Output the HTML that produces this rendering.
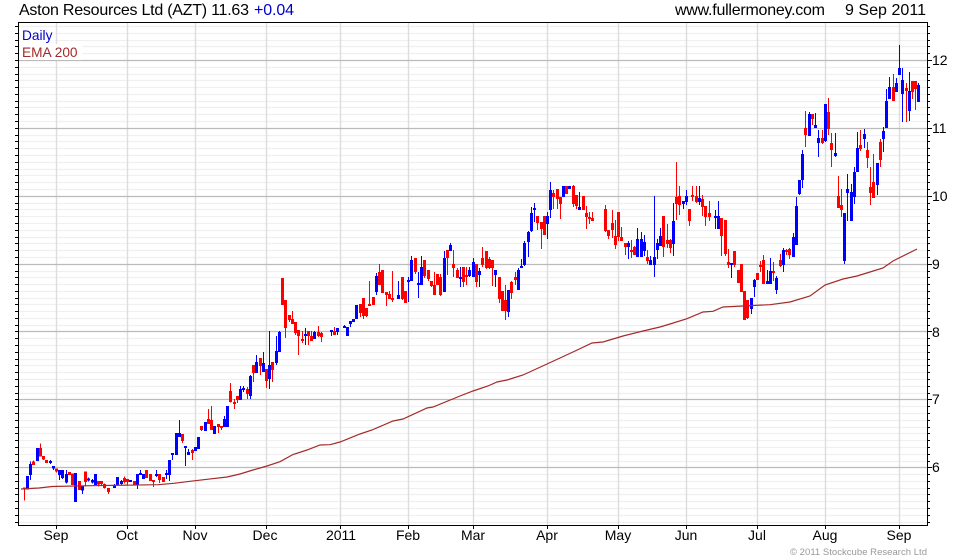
<!DOCTYPE html>
<html><head><meta charset="utf-8"><title>Aston Resources Ltd (AZT)</title>
<style>
html,body{margin:0;padding:0;background:#fff}
svg{display:block}
text{font-family:"Liberation Sans",Arial,sans-serif;fill:#000}
.t{font-size:16px}.a{font-size:14px}.l{font-size:13.7px}
</style></head><body>
<svg width="980" height="560" viewBox="0 0 980 560" xmlns="http://www.w3.org/2000/svg">
<rect width="980" height="560" fill="#fff"/>
<path fill="none" stroke="#f0f0f0" stroke-width="1.3" d="M19 26.5H927M19 33.5H927M19 40.5H927M19 46.5H927M19 53.5H927M19 67.5H927M19 74.5H927M19 80.5H927M19 87.5H927M19 94.5H927M19 101.5H927M19 107.5H927M19 114.5H927M19 121.5H927M19 135.5H927M19 141.5H927M19 148.5H927M19 155.5H927M19 162.5H927M19 169.5H927M19 175.5H927M19 182.5H927M19 189.5H927M19 203.5H927M19 209.5H927M19 216.5H927M19 223.5H927M19 230.5H927M19 237.5H927M19 243.5H927M19 250.5H927M19 257.5H927M19 271.5H927M19 277.5H927M19 284.5H927M19 291.5H927M19 298.5H927M19 304.5H927M19 311.5H927M19 318.5H927M19 325.5H927M19 338.5H927M19 345.5H927M19 352.5H927M19 359.5H927M19 365.5H927M19 372.5H927M19 379.5H927M19 386.5H927M19 393.5H927M19 406.5H927M19 413.5H927M19 420.5H927M19 427.5H927M19 433.5H927M19 440.5H927M19 447.5H927M19 454.5H927M19 461.5H927M19 474.5H927M19 481.5H927M19 488.5H927M19 494.5H927M19 501.5H927M19 508.5H927M19 515.5H927M19 522.5H927"/>
<path fill="none" stroke="#dddddd" stroke-width="1.4" d="M56.5 22V525M127.5 22V525M195.5 22V525M266.5 22V525M340.5 22V525M408.5 22V525M473.5 22V525M547.5 22V525M618.5 22V525M686.5 22V525M757.5 22V525M825.5 22V525M899.5 22V525"/>
<path fill="none" stroke="#bbbbbb" stroke-width="1.3" d="M19 60.5H927M19 128.5H927M19 196.5H927M19 264.5H927M19 331.5H927M19 399.5H927M19 467.5H927"/>
<rect x="20" y="28" width="35" height="16" fill="#fff"/><rect x="20" y="44" width="62" height="16" fill="#fff"/>

<g shape-rendering="crispEdges" fill="none">
<g transform="translate(0,420) scale(.33333)">
<path stroke="#0000ff" stroke-width="3" d="M82 168V208M91 124V180M112 84V123M151 120V132M160 138V150M178 150V180M187 150V177M199 150V190M226 159V246M247 197V222M265 172V185M277 177V190M286 162V195M343 192V204M352 171V195M364 180V193M391 180V186M412 162V207M421 150V165M430 162V177M469 150V171M499 150V177M508 120V183M517 99V120M529 39V105M538 0V51M556 78V138M565 87V105M586 81V93M595 51V87"/>
<path stroke="#0000ff" stroke-width="9" d="M82 168V208M91 132V165M112 84V123M151 123V129M160 138V146M178 150V165M187 150V174M199 162V187M226 159V246M247 197V211M265 175V181M277 180V187M286 162V195M343 195V204M352 171V195M364 183V192M391 180V186M412 162V195M421 159V165M430 162V177M469 162V168M499 159V165M508 120V165M517 99V105M529 39V105M538 39V51M556 78V84M565 96V105M586 81V93M595 51V87"/>
<path stroke="#ff0000" stroke-width="3" d="M73 202V242M100 122V135M121 70V110M130 108V120M139 120V129M169 145V158M208 156V165M217 160V195M238 183V210M256 155V200M295 183V200M304 183V195M313 190V205M325 204V222M373 170V190M382 177V195M403 183V195M439 150V174M451 162V183M460 180V201M478 162V189M490 171V186M547 42V69M577 87V120"/>
<path stroke="#ff0000" stroke-width="9" d="M73 202V208M100 124V135M121 84V110M130 108V118M139 120V129M169 145V155M208 156V165M217 160V195M238 183V210M256 155V186M295 183V193M304 183V192M313 192V204M325 204V216M373 174V186M382 177V186M403 183V195M439 150V174M451 162V183M460 180V186M478 162V180M490 171V186M547 42V63M577 90V99"/>
</g>
<g transform="translate(160,270) scale(.33333)">
<path stroke="#0000ff" stroke-width="3" d="M136 456V483M163 468V492M193 438V471M202 408V471M241 348V390M250 348V366M271 315V387M289 255V309M310 246V306M328 183V357M349 198V285M358 183V246M436 174V225M463 183V207M514 180V198M532 174V195M553 165V174M562 171V198M571 153V171"/>
<path stroke="#0000ff" stroke-width="9" d="M136 456V483M163 468V492M193 447V471M202 408V471M241 357V390M250 354V360M271 318V378M289 276V309M310 279V306M328 285V327M349 243V279M358 186V246M436 192V198M463 186V207M514 180V186M532 174V186M553 168V174M562 171V198M571 156V162"/>
<path stroke="#ff0000" stroke-width="3" d="M124 468V483M145 417V462M154 408V480M175 462V489M184 468V480M211 339V397M223 387V417M232 378V399M262 351V387M280 285V336M301 264V315M319 297V354M337 276V336M367 24V105M376 90V204M388 135V156M397 123V162M406 156V195M415 180V255M427 183V219M445 183V225M454 183V213M475 168V201M484 186V216M523 171V195"/>
<path stroke="#ff0000" stroke-width="9" d="M124 468V480M145 447V462M154 450V480M175 462V471M184 468V474M211 363V396M223 396V402M232 378V390M262 357V372M280 285V309M301 264V288M319 297V333M337 276V300M367 24V105M376 90V174M388 135V150M397 147V162M406 156V189M415 180V198M427 207V213M445 183V198M454 198V213M475 186V198M484 189V201M523 183V195"/>
</g>
<g transform="translate(350,170) scale(.33333)">
<path stroke="#0000ff" stroke-width="3" d="M1 453V462M10 447V456M19 405V447M79 309V375M145 333V387M175 321V396M184 258V333M205 306V384M214 258V345M283 243V366M301 219V243M331 291V351M358 291V321M370 264V321M388 294V351M436 300V351M475 360V441M505 294V360M514 267V294M523 213V288M535 183V261M544 111V186M553 99V156M592 126V207M601 36V144M640 48V81M658 48V57"/>
<path stroke="#0000ff" stroke-width="9" d="M1 453V462M10 447V456M19 405V447M79 318V366M145 375V387M175 330V336M184 270V333M205 339V345M214 291V345M283 264V366M301 225V243M331 321V327M358 300V318M370 276V321M388 303V315M436 300V315M475 360V426M505 300V360M514 288V294M523 219V285M535 186V216M544 129V183M553 114V120M592 138V162M601 60V120M640 48V81M658 48V57"/>
<path stroke="#ff0000" stroke-width="3" d="M31 402V441M40 384V447M49 414V441M58 333V408M70 381V405M88 282V345M97 300V369M109 366V408M118 363V387M127 303V396M157 321V390M166 363V399M196 264V312M223 270V324M235 300V333M244 333V351M253 306V375M262 312V345M271 312V378M292 240V315M310 240V321M322 294V324M340 291V351M349 291V345M379 282V351M397 231V291M409 243V297M418 261V297M427 270V348M448 321V399M457 363V423M466 345V450M484 333V387M496 306V345M562 138V180M574 156V237M583 138V195M610 60V117M622 57V117M631 81V147M649 48V72"/>
<path stroke="#ff0000" stroke-width="9" d="M31 402V429M40 384V438M49 414V438M58 402V408M70 381V405M88 306V345M97 300V369M109 366V375M118 372V387M127 384V390M157 321V387M166 363V399M196 264V306M223 270V318M235 300V327M244 333V348M253 345V375M262 312V345M271 321V375M292 240V264M310 282V294M322 300V324M340 291V336M349 315V321M379 282V336M397 264V285M409 243V294M418 267V294M427 270V294M448 321V387M457 363V423M466 390V423M484 336V369M496 321V330M562 138V159M574 156V177M583 138V195M610 69V81M622 57V87M631 81V102M649 48V72"/>
</g>
<g transform="translate(570,150) scale(.33333)">
<path stroke="#0000ff" stroke-width="3" d="M28 126V180M175 273V327M202 234V321M214 246V321M223 255V318M241 318V345M253 138V381M262 267V327M271 234V288M310 159V318M340 153V177M349 120V165M388 108V165M436 180V237M445 153V237M484 339V384M544 444V492M553 387V441M592 360V402M601 324V402M619 378V432M640 294V366"/>
<path stroke="#0000ff" stroke-width="9" d="M28 171V180M175 279V291M202 267V321M214 267V321M223 276V303M241 330V345M253 321V345M262 279V300M271 258V288M310 213V282M340 153V162M349 138V156M388 144V156M436 198V204M445 198V237M484 339V345M544 444V477M553 390V411M592 393V402M601 363V402M619 384V420M640 300V345"/>
<path stroke="#ff0000" stroke-width="3" d="M10 105V171M19 135V177M40 138V180M49 168V237M58 186V222M67 186V213M106 165V246M115 240V267M127 180V264M136 210V297M145 186V273M154 231V273M166 279V315M184 270V324M193 288V315M232 300V342M280 198V321M292 222V294M301 267V309M319 36V210M328 108V195M358 177V228M367 108V153M379 108V159M397 135V198M406 168V228M418 153V213M454 204V318M466 210V318M475 297V354M493 303V351M505 360V399M514 342V426M523 423V510M532 450V507M562 369V390M571 333V366M580 315V402M610 336V393M631 312V351M649 297V315M658 294V327"/>
<path stroke="#ff0000" stroke-width="9" d="M10 108V162M19 135V168M40 138V180M49 189V201M58 201V207M67 204V213M106 177V243M115 240V258M127 219V240M136 258V285M145 186V261M154 261V273M166 279V291M184 300V306M193 291V315M232 321V333M280 198V291M292 270V282M301 270V294M319 141V162M328 138V165M358 177V213M367 135V141M379 138V156M397 147V171M406 168V201M418 189V201M454 204V258M466 210V312M475 336V345M493 303V345M505 360V399M514 342V426M523 423V510M532 450V504M562 369V390M571 345V351M580 330V402M610 363V369M631 330V348M649 300V306M658 297V315"/>
</g>
<g transform="translate(760,40) scale(.33333)">
<path stroke="#0000ff" stroke-width="3" d="M100 579V651M109 471V615M118 420V465M127 330V444M148 216V288M166 219V264M175 270V351M196 192V306M226 279V351M253 519V672M262 402V543M274 432V543M283 381V492M292 276V396M313 267V324M352 369V465M370 261V336M379 147V264M388 111V177M409 114V156M418 15V105M427 84V246M448 96V243M475 129V186"/>
<path stroke="#0000ff" stroke-width="9" d="M100 591V651M109 498V615M118 420V462M127 342V420M148 222V288M166 255V264M175 294V309M196 192V303M226 339V348M253 519V663M262 447V459M274 456V543M283 396V471M292 324V396M313 282V297M352 369V435M370 273V297M379 183V264M388 141V177M409 129V156M418 84V105M427 120V162M448 153V213M475 135V186"/>
<path stroke="#ff0000" stroke-width="3" d="M136 213V321M157 222V255M187 270V312M205 174V285M214 279V381M235 408V504M244 447V531M301 270V333M322 306V384M331 381V495M340 342V474M361 297V381M400 102V183M439 129V246M457 123V177M466 123V210"/>
<path stroke="#ff0000" stroke-width="9" d="M136 264V285M157 222V237M187 294V309M205 216V267M214 309V330M235 468V504M244 495V510M301 315V327M322 330V354M331 441V459M340 426V474M361 306V360M400 141V183M439 144V153M457 123V156M466 123V147"/>
</g>
</g>
<path fill="none" stroke="#a52a2a" stroke-width="1.2" d="M21 489L39 488L52 486.5L91 485.7L158 484.7L174 483.3L190 481.3L207 479.3L227 477L240 474L253 470L267 466L280 461.7L293 454.5L307 450L320 445L330 444.7L340 442L360 434L372 430L393 421L403 419L427 408L433 407L460 396L473 391L488 386L497 382L507 380L523 375L547 364L573 352L592 343L603 342L623 336L643 331L660 327L670 324L687 318.7L703 312L713 311.3L723 307L743 306L770 304.7L790 302L810 296L825 285L843 279L857 276L870 272L883 268L893 261L917 249"/>

<path fill="none" stroke="#000" stroke-width="1" d="M18.5 22V525.5H927.5V22.5H18"/>
<path fill="none" stroke="#000" stroke-width="1" d="M56.5 525V529M127.5 525V529M195.5 525V529M266.5 525V529M340.5 525V529M408.5 525V529M473.5 525V529M547.5 525V529M618.5 525V529M686.5 525V529M757.5 525V529M825.5 525V529M899.5 525V529M15 26.5H18M15 33.5H18M15 40.5H18M15 46.5H18M15 53.5H18M15 60.5H18M15 67.5H18M15 74.5H18M15 80.5H18M15 87.5H18M15 94.5H18M15 101.5H18M15 107.5H18M15 114.5H18M15 121.5H18M15 128.5H18M15 135.5H18M15 141.5H18M15 148.5H18M15 155.5H18M15 162.5H18M15 169.5H18M15 175.5H18M15 182.5H18M15 189.5H18M15 196.5H18M15 203.5H18M15 209.5H18M15 216.5H18M15 223.5H18M15 230.5H18M15 237.5H18M15 243.5H18M15 250.5H18M15 257.5H18M15 264.5H18M15 271.5H18M15 277.5H18M15 284.5H18M15 291.5H18M15 298.5H18M15 304.5H18M15 311.5H18M15 318.5H18M15 325.5H18M15 331.5H18M15 338.5H18M15 345.5H18M15 352.5H18M15 359.5H18M15 365.5H18M15 372.5H18M15 379.5H18M15 386.5H18M15 393.5H18M15 399.5H18M15 406.5H18M15 413.5H18M15 420.5H18M15 427.5H18M15 433.5H18M15 440.5H18M15 447.5H18M15 454.5H18M15 461.5H18M15 467.5H18M15 474.5H18M15 481.5H18M15 488.5H18M15 494.5H18M15 501.5H18M15 508.5H18M15 515.5H18M15 522.5H18"/>
<path fill="none" stroke="#000" stroke-width="1" d="M928 26.5H930M928 33.5H930M928 40.5H930M928 46.5H930M928 53.5H930M928 60.5H932M928 67.5H930M928 74.5H930M928 80.5H930M928 87.5H930M928 94.5H930M928 101.5H930M928 107.5H930M928 114.5H930M928 121.5H930M928 128.5H932M928 135.5H930M928 141.5H930M928 148.5H930M928 155.5H930M928 162.5H930M928 169.5H930M928 175.5H930M928 182.5H930M928 189.5H930M928 196.5H932M928 203.5H930M928 209.5H930M928 216.5H930M928 223.5H930M928 230.5H930M928 237.5H930M928 243.5H930M928 250.5H930M928 257.5H930M928 264.5H932M928 271.5H930M928 277.5H930M928 284.5H930M928 291.5H930M928 298.5H930M928 304.5H930M928 311.5H930M928 318.5H930M928 325.5H930M928 331.5H932M928 338.5H930M928 345.5H930M928 352.5H930M928 359.5H930M928 365.5H930M928 372.5H930M928 379.5H930M928 386.5H930M928 393.5H930M928 399.5H932M928 406.5H930M928 413.5H930M928 420.5H930M928 427.5H930M928 433.5H930M928 440.5H930M928 447.5H930M928 454.5H930M928 461.5H930M928 467.5H932M928 474.5H930M928 481.5H930M928 488.5H930M928 494.5H930M928 501.5H930M928 508.5H930M928 515.5H930M928 522.5H930"/>

<text class="t" x="19" y="15" textLength="230">Aston Resources Ltd (AZT) 11.63</text>
<text class="t" x="254" y="15" textLength="40" style="fill:#0000cc">+0.04</text>
<text class="t" x="675" y="15" textLength="150">www.fullermoney.com</text>
<text class="t" x="845" y="15" textLength="81">9 Sep 2011</text>
<text class="l" x="22" y="40" style="fill:#0000cc">Daily</text>
<text class="l" x="22" y="57" style="fill:#a52a2a">EMA 200</text>
<g>
<text class="a" x="932" y="65">12</text>
<text class="a" x="932" y="133">11</text>
<text class="a" x="932" y="201">10</text>
<text class="a" x="932" y="269">9</text>
<text class="a" x="932" y="337">8</text>
<text class="a" x="932" y="404">7</text>
<text class="a" x="932" y="472">6</text>
</g>
<g text-anchor="middle">
<text class="a" x="56" y="540">Sep</text>
<text class="a" x="127" y="540">Oct</text>
<text class="a" x="195" y="540">Nov</text>
<text class="a" x="265" y="540">Dec</text>
<text class="a" x="341" y="540">2011</text>
<text class="a" x="408" y="540">Feb</text>
<text class="a" x="473" y="540">Mar</text>
<text class="a" x="547" y="540">Apr</text>
<text class="a" x="618" y="540">May</text>
<text class="a" x="686" y="540">Jun</text>
<text class="a" x="757" y="540">Jul</text>
<text class="a" x="825" y="540">Aug</text>
<text class="a" x="899" y="540">Sep</text>
</g>
<text x="790" y="555" textLength="137" style="font-size:9.5px;fill:#999">© 2011 Stockcube Research Ltd</text>
</svg>
</body></html>
